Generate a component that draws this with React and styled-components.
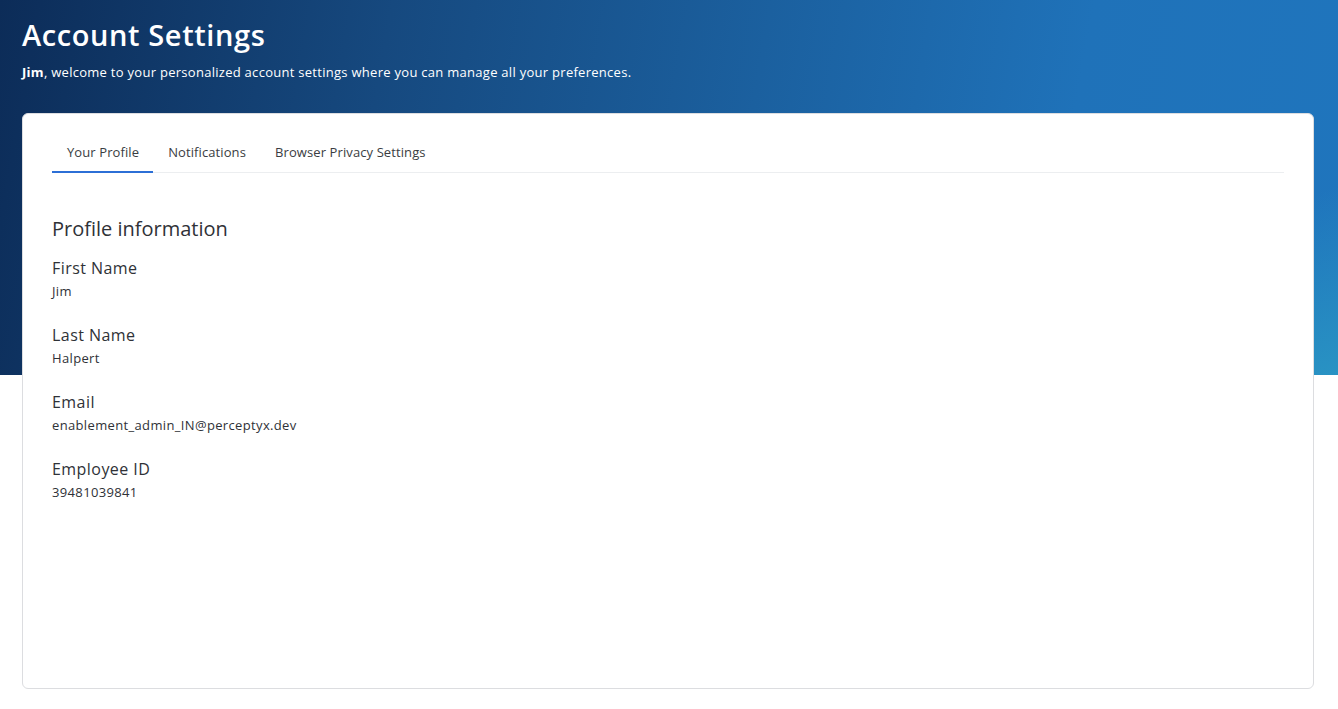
import React from 'react';
import styled, { createGlobalStyle } from 'styled-components';

const GlobalStyle = createGlobalStyle`
  html, body {
    margin: 0;
    padding: 0;
    background: #ffffff;
  }
  body {
    font-family: "Open Sans", "Liberation Sans", sans-serif;
    color: #2f3237;
  }
  * { box-sizing: border-box; }
`;

const profile = [
  { label: 'First Name', value: 'Jim' },
  { label: 'Last Name', value: 'Halpert' },
  { label: 'Email', value: 'enablement_admin_IN@perceptyx.dev' },
  { label: 'Employee ID', value: '39481039841' },
];

const tabs = ['Your Profile', 'Notifications', 'Browser Privacy Settings'];

const App = () => {
  return (
    <>
      <GlobalStyle />
      <Page>
        <Banner />
        <Content>
          <Title>Account Settings</Title>
          <Welcome>
            <strong>Jim</strong>, welcome to your personalized account settings where you can manage all your preferences.
          </Welcome>
          <Card>
            <TabBar>
              {tabs.map((t, i) => (
                <Tab key={t} $active={i === 0}>{t}</Tab>
              ))}
            </TabBar>
            <SectionTitle>Profile information</SectionTitle>
            <Fields>
              {profile.map((f) => (
                <Field key={f.label}>
                  <Label>{f.label}</Label>
                  <Value>{f.value}</Value>
                </Field>
              ))}
            </Fields>
          </Card>
        </Content>
      </Page>
    </>
  );
};

const Page = styled.div`
  position: relative;
  min-height: 709px;
`;

/* the blue band behind the top of the card */
const Banner = styled.div`
  position: absolute;
  left: 0;
  right: 0;
  top: 0;
  height: 375px;
  background:
    linear-gradient(160deg, rgba(42, 150, 196, 0) 78%, rgba(42, 150, 196, 0.9) 100%),
    linear-gradient(100deg, #0c2c58 0%, #16497f 28%, #1b609f 55%, #1f72b9 78%, #1f75bd 100%);
`;

const Content = styled.div`
  position: relative;
  padding: 17px 24px 20px 22px;
`;

const Title = styled.h1`
  margin: 0;
  font-size: 29px;
  font-weight: 600;
  line-height: 36px;
  color: #ffffff;
  letter-spacing: 0.6px;
`;

const Welcome = styled.p`
  margin: 11px 0 0;
  font-size: 13px;
  line-height: 16px;
  color: #ffffff;
  letter-spacing: 0.28px;
  strong { font-weight: 700; }
`;

const Card = styled.section`
  margin-top: 33px;
  height: 576px;
  background: #ffffff;
  border: 1px solid #dcdde0;
  border-radius: 6px;
  padding: 26px 29px 0 29px;
`;

const TabBar = styled.nav`
  display: flex;
  border-bottom: 1px solid #eceef0;
`;

const Tab = styled.div`
  padding: 4px 14px 11px 15px;
  font-size: 13px;
  line-height: 16px;
  letter-spacing: 0.1px;
  color: #3a3d42;
  margin-bottom: -1px;
  border-bottom: 2px solid ${(p) => (p.$active ? '#2c6fd6' : 'transparent')};
`;

const SectionTitle = styled.h2`
  margin: 44px 0 0;
  font-size: 20px;
  font-weight: 500;
  line-height: 24px;
  letter-spacing: 0;
  color: #2f3237;
`;

const Fields = styled.div`
  display: flex;
  flex-direction: column;
  gap: 26px;
  margin-top: 17px;
`;

const Field = styled.div`
  display: flex;
  flex-direction: column;
  gap: 5px;
`;

const Label = styled.div`
  font-size: 16px;
  font-weight: 500;
  line-height: 20px;
  letter-spacing: 0.45px;
  color: #2f3237;
`;

const Value = styled.div`
  font-size: 13px;
  line-height: 16px;
  letter-spacing: 0.35px;
  color: #2f3237;
`;

export default App;
